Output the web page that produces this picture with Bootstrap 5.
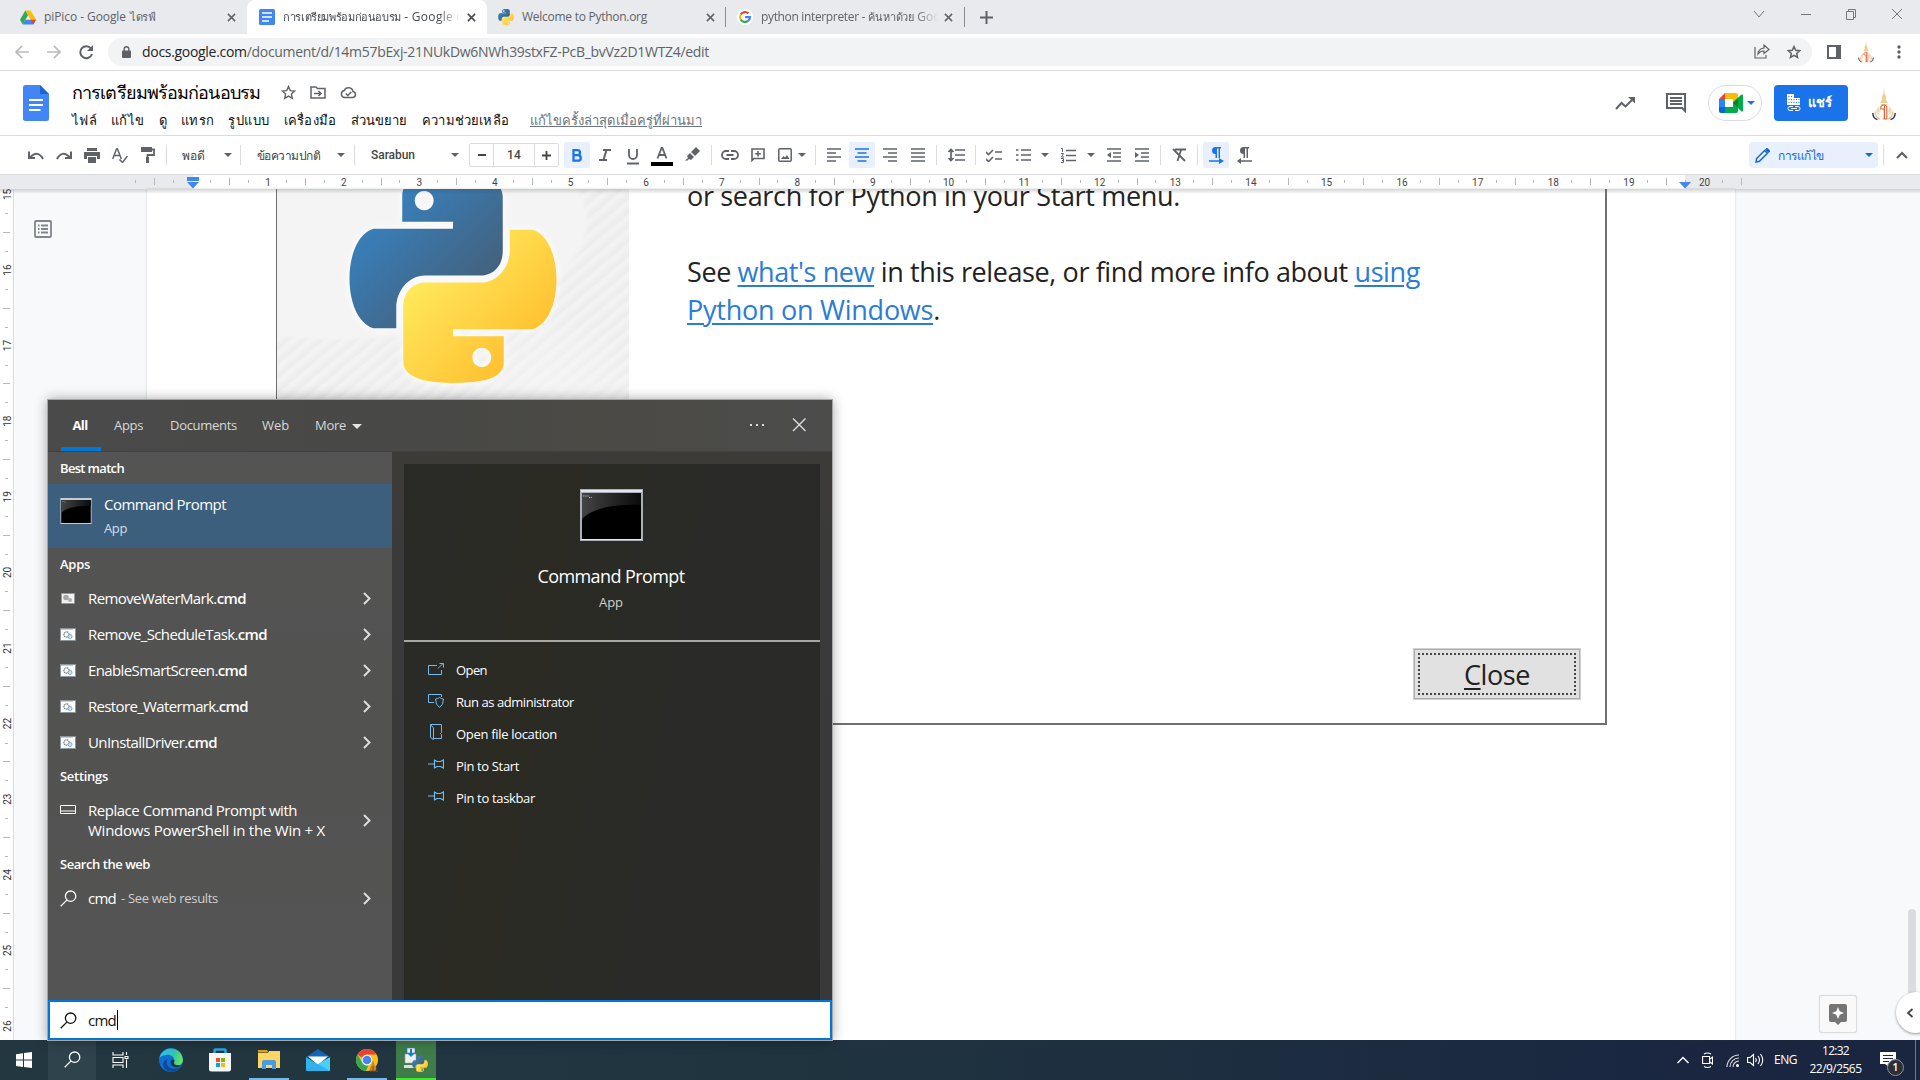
<!DOCTYPE html>
<html lang="th">
<head>
<meta charset="utf-8">
<title>การเตรียมพร้อมก่อนอบรม - Google เอกสาร</title>
<link href="https://cdn.jsdelivr.net/npm/bootstrap@5.3.0/dist/css/bootstrap.min.css" rel="stylesheet">
<style>
body{margin:0;font-family:"Open Sans","Noto Sans",sans-serif;overflow:hidden;line-height:1.2}
svg{display:block;flex:none}
[data-w]{white-space:nowrap;display:inline-block}
.screen{width:1920px;height:1080px}
/* browser */
.tabstrip{height:34px;background:#e8eaed;font-size:12px;color:#5f6368}
.btab{height:34px;flex:none;padding-left:20px}
.btab .lbl{margin-left:8px;line-height:22px;white-space:nowrap;flex:none}
.btab.on{background:#fff;border-radius:8px 8px 0 0;width:240px;padding-left:12px;color:#45494d}
.fade-r{overflow:hidden;-webkit-mask-image:linear-gradient(90deg,#000 88%,transparent)}
.th{font-size:11px}
.vline{width:1px;height:20px;background:#8a8d91;flex:none}
.navrow{height:37px;border-bottom:1px solid #d9dbde;background:#fff;font-size:14px;color:#5f6368;padding-bottom:1px}
.omni{margin-left:7px;width:1704px;height:28px;border-radius:14px;background:#f1f3f4;flex:none}
/* docs */
.dochead{height:65px;background:#fff;border-bottom:1px solid #d9dbde}
.doctitle{font-size:18px;color:#000;line-height:24px}
.docmenu{font-size:13px;color:#111;line-height:18px;height:18px}
.meet{width:54px;height:36px;border:1px solid #dadce0;border-radius:18px}
.share{width:74px;height:36px;border-radius:4px;background:#1a73e8;color:#fff;font-size:13px;font-weight:600}
.tools{height:39px;border-bottom:1px solid #d9dbde;background:#fff;padding-left:22px;color:#444746;font:500 12px Roboto,"Open Sans",sans-serif}
.tl{width:28px;height:26px;flex:none;display:flex;align-items:center;justify-content:center}
.tl.on{width:26px;background:#e8f0fe;color:#1a73e8;border-radius:2px;margin:0 1px}
.w30{width:30px}.w26{width:26px}.w14{width:14px}.w8{width:8px}.w16{width:16px}.w32{width:32px}
.sp{width:9px;height:20px;flex:none;background:linear-gradient(#dadce0,#dadce0) 4px 0/1px 20px no-repeat}
.car{width:0;height:0;border:4px solid transparent;border-top-color:#5f6368;border-bottom:0}
.fsbox{border:1px solid #dadce0;height:24px;width:90px;border-radius:2px;margin-right:4px}
.fsbox>*{border-right:1px solid #dadce0;height:22px;display:flex;align-items:center;justify-content:center}
.editbtn{width:129px;height:26px;background:#e8f0fe;border-radius:4px;color:#1967d2;padding:0 5px 0 6px}
.hrule{height:14px;background:#fff}
.editor{height:851px;background:#f8f9fa}
.topshade{height:5px;left:0;right:0;top:0;background:linear-gradient(rgba(60,64,67,.22),transparent)}
.vrule{width:14px;border-right:1px solid #dadce0;background:#fff}
.sheet{margin-left:133px;width:1588px;background:#fff;box-shadow:0 0 2px rgba(60,64,67,.25)}
.outline-ic{left:34px;top:31px}
.pic{margin-left:129px;width:1331px;height:536px;border:2px solid #6f6f6f;border-top:0;border-left-width:1.5px;overflow:hidden}
.side{width:352px;overflow:hidden;background:radial-gradient(ellipse 250px 120px at 18% 6%,#f4f4f4 97%,transparent),radial-gradient(circle 90px at 78% 40%,rgba(246,246,246,.7),transparent),repeating-linear-gradient(140deg,rgba(0,0,0,.022) 0 2px,transparent 4px 7px,rgba(0,0,0,.014) 9px 11px),linear-gradient(#f2f2f2,#f5f5f5)}
.side svg{margin:-15px 0 0 70px;filter:drop-shadow(0 0 5px #fff)}
.msg{font-size:27px;line-height:38px;color:#222;padding-left:58px;margin-top:-12px}
.msg u,.closebtn u{text-decoration-thickness:2px;text-underline-offset:3px}
.msg u{color:#2b7cd6}
.closebtn{width:166px;height:50px;background:#e1e1e1;border:1px solid #adadad;outline:1px solid #d0d0d0;margin:auto 25px 24px auto;padding:3px;font-size:27px;color:#222}
.closebtn>div{border:2px dotted #444;height:42px;line-height:39px;text-align:center}
.bar-v{left:1908px;top:720px;width:8px;height:100px;background:#dadce0;border-radius:4px}
.explore{left:1819px;top:806px;width:38px;height:38px;border:1px solid #dadce0;border-radius:3px;background:#f9f9f9;box-shadow:0 0 1px #ccc}
.pull{left:1896px;top:803px;width:40px;height:41px;border-radius:50%;background:#fff;box-shadow:0 1px 3px rgba(0,0,0,.4);padding-left:10px}
/* search flyout */
.fly{left:48px;top:400px;width:784px;height:640px;color:#fff;outline:1px solid #a5a5a5;box-shadow:0 0 12px rgba(0,0,0,.4)}
.flyhead{height:52px;background:linear-gradient(90deg,#4a4a4a,#484846 50%,#4b4a45 68%,#4c4c4c);font-size:13px;color:#d8d8d8;border-bottom:1px solid #414141}
.ftab{height:51px;border-bottom:4px solid transparent;padding-top:5px;display:flex;align-items:center;justify-content:center;flex:none}
.ftab.on{border-color:#0078d7;color:#fff;font-weight:700;width:40px;margin-left:13px}
.ftab.on span{margin-right:2px}
.fleft{width:344px;background:linear-gradient(#545454,#525251 50%,#545454)}
.fh{height:32px;font-size:13px;font-weight:600;padding:2px 0 0 12px;display:flex;align-items:center}
.fr{height:36px;padding:0 21px 0 12px;font-size:15px;display:flex;align-items:center}
.fr .ic{width:28px;flex:none}
.fr b{font-weight:600}
.best{height:64px;background:#3c5f7d;padding-left:12px}
.fright{width:440px;background:linear-gradient(#3c3b37,#3a3a3a 20%,#393939);padding:12px 12px 0}
.dark{background:linear-gradient(100deg,#2a2a28,#2b2a23 30%,#2a2a28 60%,#2a2a2a);height:536px}
.hero{height:178px;border-bottom:2px solid #a9a7a4;padding:25px 2px 0 0}
.act{height:32px;font-size:13px;padding:1px 0 0 24px;display:flex;align-items:center}
.act span{margin-left:12px}
.sbox{height:40px;background:#fff;border:2px solid #0078d7;color:#111;font-size:15px;padding-left:10px}
.caret-t{width:1px;height:20px;background:#000;margin-left:1px}
/* taskbar */
.tbar{height:40px;background:linear-gradient(90deg,#223740,#20353f 35%,#1e2f40 60%,#1a2741 85%,#1a2540);color:#fff;font-size:12px}
.tk{width:40px;margin-right:9px;height:40px;flex:none;display:flex;align-items:center;justify-content:center;border-bottom:2px solid transparent;padding-top:1px}
.tk.run{border-color:#76b9ed}
.tk.wide{width:48px;margin:0}
.tk.srch{background:#2f434c}
.tk.py{background:#3f7c49;border-color:#3ee82d}
.badge-n{width:17px;height:17px;border-radius:50%;background:#2b2f36;border:1px solid #8c929c;left:7px;top:7px;font-size:11px;font-weight:600;line-height:14px;text-align:center}
</style>
<script src="https://cdn.jsdelivr.net/npm/bootstrap@5.3.0/dist/js/bootstrap.bundle.min.js"></script>
</head>
<body>
<svg width="0" height="0" class="position-absolute"><defs>
<linearGradient id="pb" x1="0" y1="0" x2="1" y2="1"><stop offset=".25" stop-color="#387eb8"/><stop offset=".8" stop-color="#44617d"/></linearGradient>
<linearGradient id="pyel" x1="1" y1="1" x2="0" y2="0"><stop offset=".2" stop-color="#ffe95c"/><stop offset=".85" stop-color="#ffbd2c"/></linearGradient>
<symbol id="python" viewBox="348 173 210 211"><path fill="url(#pb)" fill-rule="evenodd" d="M402 221V195C402 181 416 174 453 174S503 183 503 196V250C503 265 494 275 480 275H425C408 275 396 291 396 307V328H373C341 318 341 238 373 228H453V221ZM424 190a9.5 9.7 0 1 0 .1 0Z"/><g transform="rotate(180 453 278.5)"><path fill="url(#pyel)" fill-rule="evenodd" d="M402 221V195C402 181 416 174 453 174S503 183 503 196V250C503 265 494 275 480 275H425C408 275 396 291 396 307V328H373C341 318 341 238 373 228H453V221ZM424 190a9.5 9.7 0 1 0 .1 0Z"/></g></symbol>
<symbol id="x" viewBox="0 0 10 10"><path d="M1 1l8 8M9 1l-8 8" stroke="currentColor" stroke-width="1.7" fill="none"/></symbol>
<symbol id="chev" viewBox="0 0 8 13"><path d="M1 1l5.5 5.5L1 12" stroke="#ddd" stroke-width="2" fill="none"/></symbol>
<symbol id="mag" viewBox="0 0 17 17"><path d="M6.6 10.4L.7 16.3M15.8 6.2a5.2 5.2 0 1 1-10.4 0 5.2 5.2 0 0 1 10.4 0Z" stroke="currentColor" stroke-width="1.3" fill="none"/></symbol>
<symbol id="pin" viewBox="0 0 16 10"><path d="M0 5h6M6.500 .5v9M6.500 1l2.500 1.500h3.500l3-1.500v8l-3-1.500H9L6.500 9" stroke="#76b9ed" stroke-width="1.200" fill="none"/></symbol>
<symbol id="cmdf" viewBox="0 0 16 13"><path fill="#fff" stroke="#8d969c" d="M.5.5h15v12H.5z"/><path stroke="#8d969c" d="M0 1h13"/><circle cx="6.500" cy="6.500" r="2.600" fill="none" stroke="#777" stroke-width="1.300" stroke-dasharray="1.200 .6"/><circle cx="10" cy="8.500" r="2" fill="#cfe8f7" stroke="#6aa3c5" stroke-width=".9"/></symbol>
<linearGradient id="gl" x1="0" x2="1"><stop stop-color="#444"/><stop offset="1" stop-color="#0b0b0b"/></linearGradient>
<symbol id="term" viewBox="0 0 63 52"><path fill="#a9b0bb" d="M0 0h63v52H0z"/><path fill="#e3e6ef" d="M1 1h61v2H1zM1 50h61v1H1z"/><path fill="#000" d="M2 4h59v46H2z"/><path fill="url(#gl)" d="M2 4h59v12C35 15 12 19 2 30z"/><path d="M3 7h6M9 8.500h3" stroke="#aaa" stroke-dasharray="1.500 .7"/></symbol>
<symbol id="crest" viewBox="0 0 24 33"><path fill="#edcf92" d="M12 0l.7 6 1.600 3-.4 2.500L16 15H8l2.100-3.500L9.700 9l1.600-3z"/><path fill="#f3dcae" d="M8.500 16h7l-1 2h-5zM4 22l3-4 1 5-2 5zM20 22l-3-4-1 5 2 5z"/><path fill="none" stroke="#d9603a" stroke-width="1.100" d="M8.800 18.500q3-3.500 6 0V31h-3.500M8.800 18.500v2.500h3.500v10M12.500 18v13"/><path fill="none" stroke="#2c2f6e" stroke-width="1.400" d="M.8 25q.2 5.500 4.700 6.500M23.200 25q-.2 5.500-4.700 6.500"/><path fill="none" stroke="#f0b45c" stroke-width="1.100" d="M3 23.500q.5 6 5 7.500M21 23.500q-.5 6-5 7.500"/></symbol>
<symbol id="docic" viewBox="0 0 26 36"><path fill="#4285f4" d="M2.500 0H17l9 9v24.500a2.500 2.500 0 0 1-2.500 2.500h-21A2.500 2.500 0 0 1 0 33.500v-31A2.500 2.500 0 0 1 2.500 0z"/><path fill="#1c66d0" d="M17 0l9 9h-9z"/><path stroke="#fff" stroke-width="2" d="M6 15h14M6 20h14M6 25h11.500"/></symbol>
</defs></svg>

<div class="screen position-relative d-flex flex-column overflow-hidden">
<!-- tab strip -->
<div class="tabstrip d-flex align-items-center">
 <div class="btab d-flex align-items-center" style="width:247px"><svg width="16" height="15" viewBox="0 0 24 21"><path fill="#fbbc04" d="M8 0h8l8 14h-8z"/><path fill="#34a853" d="M8 0l4 7L4 21l-4-7z"/><path fill="#4285f4" d="M8 14h16l-4 7H4z"/><path fill="#ea4335" d="M16 14h8l-4 7z"/></svg><span class="lbl"><span data-w="82">piPico - Google</span><span class="th ms-1" data-w="25">ไดรฟ์</span></span><svg class="ms-auto" style="margin-right:11px" width="9" height="9"><use href="#x"/></svg></div>
 <div class="btab on d-flex align-items-center"><svg width="16" height="16" viewBox="0 0 16 16"><rect width="16" height="16" rx="1.500" fill="#4285f4"/><path stroke="#fff" stroke-width="1.700" d="M3 4h10M3 8h10M3 12h7"/></svg><span class="lbl fade-r" style="width:177px"><span class="th" data-w="118">การเตรียมพร้อมก่อนอบรม</span> <span data-w="49">- Google</span> เอก</span><svg class="ms-auto" style="margin-right:11px" width="9" height="9"><use href="#x"/></svg></div>
 <div class="btab d-flex align-items-center" style="width:238px;padding-left:11px"><svg width="16" height="16"><use href="#python"/></svg><span class="lbl" data-w="125">Welcome to Python.org</span><svg class="ms-auto" style="margin-right:10px" width="9" height="9"><use href="#x"/></svg></div>
 <div class="vline"></div>
 <div class="btab d-flex align-items-center" style="width:238px;padding-left:11px"><svg width="16" height="16" viewBox="0 0 16 16"><circle cx="8" cy="8" r="8" fill="#fff"/><g fill="none" stroke-width="2.200"><path stroke="#ea4335" d="M3.700 5.500A5 5 0 0 1 11.500 4.400"/><path stroke="#fbbc04" d="M3.700 5.500a5 5 0 0 0 0 5"/><path stroke="#34a853" d="M3.700 10.500a5 5 0 0 0 7.600 1.200"/><path stroke="#4285f4" d="M11.300 11.700A5 5 0 0 0 13 8.200H8"/></g></svg><span class="lbl fade-r" style="width:177px"><span data-w="104">python interpreter -</span> <span class="th" data-w="46">ค้นหาด้วย</span> Goo</span><svg class="ms-auto" style="margin-right:11px" width="9" height="9"><use href="#x"/></svg></div>
 <div class="vline"></div>
 <svg style="margin-left:15px" width="13" height="13"><path d="M6.500 0v13M0 6.500h13" stroke="#5f6368" stroke-width="2"/></svg>
 <svg class="ms-auto" style="margin-right:17px;margin-bottom:6px" width="150" height="12" fill="none" stroke="#777"><path d="M1 3l5 6 5-6M48 6.500h10M93.500 3.500h7v8h-7zM95.500 3.500v-2h7v8h-2M139 1l10 10M149 1l-10 10"/></svg>
</div>
<!-- address row -->
<div class="navrow d-flex align-items-center">
 <svg style="margin-left:15px" width="86" height="18" fill="none" stroke-width="1.700"><path stroke="#b8babd" d="M14 9H1M7 3L1 9l6 6M32 9h13M39 3l6 6-6 6"/><path stroke="#5f6368" stroke-width="2" d="M76 5.500A6 6 0 1 0 77 11"/><path fill="#5f6368" d="M78 2v6h-6z"/></svg>
 <div class="omni d-flex align-items-center"><svg style="margin-left:14px" width="9" height="12"><path fill="#5f6368" d="M1 4.500h7a1 1 0 0 1 1 1V11a1 1 0 0 1-1 1H1a1 1 0 0 1-1-1V5.500a1 1 0 0 1 1-1z"/><path fill="none" stroke="#5f6368" stroke-width="1.400" d="M2.200 5V3a2.300 2.300 0 0 1 4.600 0v2"/></svg><span style="margin-left:11px;padding-top:1px" data-w="567"><span class="text-dark">docs.google.com</span>/document/d/14m57bExj-21NUkDw6NWh39stxFZ-PcB_bvVz2D1WTZ4/edit</span>
 <svg class="ms-auto" width="16" height="15" fill="none" stroke="#5f6368" stroke-width="1.200"><path d="M1 3v11h11v-3M4 10q0-5 6-6V1l5 4.500L10 9.500V7q-4 0-6 3z"/></svg><svg style="margin:0 11px 0 17px" width="14" height="14" viewBox="0 0 24 24"><path fill="none" stroke="#5f6368" stroke-width="2.500" d="M12 2.500l2.900 6.500 7 .7-5.300 4.700 1.500 7-6.100-3.600-6.100 3.600 1.500-7L2.100 9.700l7-.7z"/></svg></div>
 <svg style="margin-left:15px" width="14" height="14"><path fill="#5f6368" fill-rule="evenodd" d="M0 0h14v14H0zM2 2v10h7V2z"/></svg><svg style="margin-left:17px" width="16" height="22"><use href="#crest"/></svg><svg style="margin-left:23px" width="4" height="14" fill="#5f6368"><circle cx="2" cy="2" r="1.700"/><circle cx="2" cy="7" r="1.700"/><circle cx="2" cy="12" r="1.700"/></svg>
</div>
<!-- document header -->
<div class="dochead d-flex">
 <svg style="margin:14px 23px 0" width="26" height="36"><use href="#docic"/></svg>
 <div style="padding-top:9px">
  <div class="d-flex align-items-center doctitle"><span data-w="188">การเตรียมพร้อมก่อนอบรม</span>
  <svg style="margin-left:21px" width="15" height="15" viewBox="0 0 24 24"><path fill="none" stroke="#5f6368" stroke-width="2.200" d="M12 2.500l2.900 6.500 7 .7-5.300 4.700 1.500 7-6.100-3.600-6.100 3.600 1.500-7L2.100 9.700l7-.7z"/></svg>
  <svg style="margin-left:14px" width="16" height="13" fill="none" stroke="#5f6368" stroke-width="1.500"><path d="M1 12V1h5l1.500 1.500H15V12zM4 7.500h7M8.500 5L11 7.500 8.500 10"/></svg>
  <svg style="margin-left:14px" width="17" height="13" fill="none" stroke="#5f6368" stroke-width="1.500"><path d="M4.500 11.500a3.500 3.500 0 0 1-.3-6.900 4.600 4.600 0 0 1 8.800 1 3 3 0 0 1 0 5.900zM5.800 7.500l2 2 3.500-3.500"/></svg></div>
  <div class="d-flex docmenu" style="margin-top:7px"><span data-w="25">ไฟล์</span><span style="margin-left:14px" data-w="33">แก้ไข</span><span style="margin-left:15px" data-w="8">ดู</span><span style="margin-left:14px" data-w="33">แทรก</span><span style="margin-left:14px" data-w="42">รูปแบบ</span><span style="margin-left:14px" data-w="52">เครื่องมือ</span><span style="margin-left:15px" data-w="56">ส่วนขยาย</span><span style="margin-left:15px" data-w="87">ความช่วยเหลือ</span><u class="text-secondary" style="margin-left:21px" data-w="172">แก้ไขครั้งล่าสุดเมื่อครู่ที่ผ่านมา</u></div>
 </div>
 <div class="ms-auto d-flex align-items-center" style="margin-right:24px;height:64px">
  <svg width="20" height="13"><path d="M1 12l5.500-6 4 3.500L17 3" stroke="#5f6368" stroke-width="2" fill="none"/><path fill="#5f6368" d="M13 0h7v6.500z"/></svg>
  <svg style="margin-left:31px" width="20" height="20" viewBox="0 0 20 20"><path fill="none" stroke="#5f6368" stroke-width="2" d="M1 1h18v17l-3-3H1zM4 5h12M4 8h12M4 11h12"/></svg>
  <div class="meet d-flex align-items-center" style="margin-left:22px;padding-left:10px"><svg width="24" height="20"><path fill="#ea4335" d="M0 6l6-6v6z"/><path fill="#fbbc04" d="M6 0h11a2 2 0 0 1 2 2v6l-5 3V6H6z"/><path fill="#2684fc" d="M0 6h6v8H0z"/><path fill="#0066da" d="M0 14h6v6H2a2 2 0 0 1-2-2z"/><path fill="#00ac47" d="M6 14h8V9l8.500-7.500q1.500-.5 1.500 1v15q0 1.500-1.500 1L19 15v3a2 2 0 0 1-2 2H6z"/><path fill="#00832d" d="M14 10l5-4.500v9z"/></svg><i class="car" style="margin-left:4px;border-top-color:#1a73e8"></i></div>
  <div class="share d-flex align-items-center" style="margin-left:12px;padding-left:13px"><svg width="14" height="18" viewBox="0 0 14 18"><path fill="#fff" d="M0 0h7v4h6v7H0z"/><path stroke="#1a73e8" d="M1.500 2.500h5M1.500 5.500h11M1.500 8.500h11" stroke-dasharray="1 1.500"/><path fill="none" stroke="#fff" d="M6 12.500H3a2 2 0 0 0 0 4h3M8 12.500h3a2 2 0 0 1 0 4H8M4 14.500h6"/></svg><span style="margin-left:7px" data-w="24">แชร์</span></div>
  <svg style="margin:2px 0 0 24px" width="24" height="33"><use href="#crest"/></svg>
 </div>
</div>
<!-- formatting toolbar -->
<div class="tools d-flex align-items-center">
 <div class="tl"><svg width="16" height="9" fill="none" stroke="#5f6368" stroke-width="2"><path d="M1 .5V7h6M2 6.500q8-8 13 1.500"/></svg></div>
 <div class="tl"><svg width="16" height="9" fill="none" stroke="#5f6368" stroke-width="2"><path d="M15 .5V7H9M14 6.500q-8-8-13 1.500"/></svg></div>
 <div class="tl"><svg width="16" height="15" fill="#5f6368"><path d="M3 0h10v3H3zM0 4h16v7h-3V8H3v3H0zM4 9h8v6H4z"/></svg></div>
 <div class="tl"><svg width="16" height="15" fill="none" stroke="#5f6368" stroke-width="1.500"><path d="M.7 11L4.500 1h1l3.800 10M2 7.500h6M7.500 11.500l3 3L15.500 8"/></svg></div>
 <div class="tl"><svg width="14" height="16"><path d="M0 0h11v5H0zM5 10h3v6H5z" fill="#5f6368"/><path d="M11 2.500h2V8H6.500v3" stroke="#5f6368" stroke-width="1.800" fill="none"/></svg></div>
 <div class="sp"></div>
 <div class="d-flex align-items-center justify-content-between" style="width:65px;padding:0 4px 0 11px"><span data-w="23">พอดี</span><i class="car"></i></div><div class="sp"></div>
 <div class="d-flex align-items-center justify-content-between" style="width:105px;padding:0 5px 0 12px"><span data-w="63">ข้อความปกติ</span><i class="car"></i></div><div class="sp"></div>
 <div class="d-flex align-items-center justify-content-between" style="width:110px;padding:0 10px 0 12px"><span data-w="44">Sarabun</span><i class="car"></i></div>
 <div class="fsbox d-flex"><div style="width:24px"><svg width="8" height="2"><path d="M0 0h8v2H0z" fill="#444"/></svg></div><div style="width:41px"><span data-w="14">14</span></div><div class="border-0" style="width:23px"><svg width="9" height="9"><path d="M4.500 0v9M0 4.500h9" stroke="#444" stroke-width="1.800"/></svg></div></div>
 <div class="tl on fw-bold"><svg width="10" height="13" fill="none" stroke="#1a73e8" stroke-width="2.300"><path d="M1.500 1.200h4a2.500 2.500 0 0 1 0 5h-4zM1.500 6.200h4.500a2.700 2.700 0 0 1 0 5.500H1.500z"/></svg></div>
 <div class="tl"><svg width="12" height="12" stroke="#5f6368" stroke-width="2"><path d="M4 1h8M0 11h8M7.500 1L4.500 11" fill="none"/></svg></div>
 <div class="tl"><svg style="margin-top:3px" width="12" height="16" stroke="#5f6368" stroke-width="1.800" fill="none"><path d="M2 0v6a4 4 0 0 0 8 0V0M0 14.500h12"/></svg></div>
 <div class="tl w30"><svg style="margin-top:3px" width="22" height="19" fill="none" stroke="#5f6368" stroke-width="1.800"><path d="M6.500 11.500L10.600 1h.8l4.100 10.500M8 8h6"/><path stroke="#000" stroke-width="4" d="M0 17h22"/></svg></div>
 <div class="tl w30"><svg style="margin-bottom:3px" width="15" height="14" fill="#5f6368"><path d="M11 0l4 4-5 5-4-4zM5 6l4 4-3 3-2-1-1.500 1.500H0L3 11 2 9z"/></svg></div>
 <div class="sp"></div>
 <div class="tl"><svg width="18" height="10" fill="none" stroke="#5f6368" stroke-width="1.800"><path d="M8 1H5a4 4 0 0 0 0 8h3M10 1h3a4 4 0 0 1 0 8h-3M5.500 5h7"/></svg></div>
 <div class="tl"><svg width="14" height="14" fill="none" stroke="#5f6368" stroke-width="1.600"><path d="M1 12.500V1h12v9.500H3zM7 3v5.500M4.200 5.700h5.600"/></svg></div>
 <div class="tl w26"><svg width="14" height="14"><rect x=".8" y=".8" width="12.400" height="12.400" rx="1" fill="none" stroke="#5f6368" stroke-width="1.500"/><path fill="#5f6368" d="M3 11l2.500-3L7 9.500 9 7l2.500 4z"/></svg></div><div class="tl w8"><i class="car"></i></div>
 <div class="sp" style="margin-left:5px"></div>
 <div class="tl"><svg width="14" height="14" stroke="#5f6368" stroke-width="1.700"><path d="M0 1h14M0 5h9M0 9h14M0 13h9"/></svg></div>
 <div class="tl on"><svg width="14" height="14" stroke="#1a73e8" stroke-width="1.700"><path d="M0 1h14M2.500 5h9M0 9h14M2.500 13h9"/></svg></div>
 <div class="tl"><svg width="14" height="14" stroke="#5f6368" stroke-width="1.700"><path d="M0 1h14M5 5h9M0 9h14M5 13h9"/></svg></div>
 <div class="tl"><svg width="14" height="14" stroke="#5f6368" stroke-width="1.700"><path d="M0 1h14M0 5h14M0 9h14M0 13h14"/></svg></div>
 <div class="sp"></div>
 <div class="tl w30"><svg width="17" height="14" stroke="#5f6368" stroke-width="1.700" fill="none"><path d="M7 2h10M7 7h10M7 12h10M3 1.500v11M.5 4L3 1.500 5.500 4M.5 10L3 12.500 5.500 10"/></svg></div>
 <div class="sp"></div>
 <div class="tl"><svg width="16" height="13" stroke="#5f6368" stroke-width="1.600" fill="none"><path d="M9 3h7M9 10h7M0 3l2.500 2.500L7 1M0 10l2.500 2.500L7 8"/></svg></div>
 <div class="tl w30"><svg width="15" height="14" stroke="#5f6368" stroke-width="1.700"><path d="M5 2h10M5 7h10M5 12h10M0 2h2.500M0 7h2.500M0 12h2.500"/></svg></div><div class="tl w14"><i class="car"></i></div>
 <div class="tl w32"><svg width="15" height="15" stroke="#5f6368" stroke-width="1.700" fill="none"><path d="M5 2.500h10M5 7.500h10M5 12.500h10"/><path stroke-width="1" d="M0 .5h1.500V4M0 5.500h2.500L.5 9H3M0 10.500h2.500v4H0M1 12.500h1.500"/></svg></div><div class="tl w14"><i class="car"></i></div>
 <div class="tl" style="margin-left:2px"><svg width="14" height="14" stroke="#5f6368" stroke-width="1.600"><path d="M0 1h14M6 5h8M6 9h8M0 13h14"/><path stroke="none" fill="#5f6368" d="M4 4v6L0 7z"/></svg></div>
 <div class="tl"><svg width="14" height="14" stroke="#5f6368" stroke-width="1.600"><path d="M0 1h14M6 5h8M6 9h8M0 13h14"/><path stroke="none" fill="#5f6368" d="M0 4v6l4-3z"/></svg></div>
 <div class="sp"></div>
 <div class="tl"><svg width="14" height="14" stroke="#5f6368" stroke-width="1.800" fill="none"><path d="M3 1.500h11M9 2L5.500 13M1 1l12 12"/></svg></div>
 <div class="sp"></div>
 <div class="tl on"><svg width="15" height="17" fill="#1a73e8"><path d="M6 0h6v1.600h-1V11H9.500V1.600H8V11H6.500V7a3.500 3.500 0 0 1 0-7zM0 13.200h10V11l5 3-5 3v-2.200H0z"/></svg></div>
 <div class="tl"><svg width="15" height="17" fill="#5f6368"><path d="M6 0h6v1.600h-1V11H9.500V1.600H8V11H6.500V7a3.500 3.500 0 0 1 0-7zM15 13.200H4V11l-4 3 4 3v-2.200h11z"/></svg></div>
 <div class="editbtn d-flex align-items-center ms-auto"><svg width="15" height="15" viewBox="0 0 15 15"><path fill="none" stroke="#1967d2" stroke-width="1.500" d="M1 14l.6-3.500 8-8 2.800 2.800-8 8zM11 1.500l1-1 2.500 2.500-1 1z"/></svg><span style="margin-left:8px" data-w="46">การแก้ไข</span><i class="car ms-auto" style="border-top-color:#1967d2"></i></div>
 <div class="sp" style="margin-left:1px"></div><svg style="margin:0 12px 0 8px" width="12" height="8"><path d="M1 7l5-5 5 5" fill="none" stroke="#5f6368" stroke-width="2.200"/></svg>
</div>
<svg class="hrule" id="hr" width="1920" height="14"></svg>
<!-- editor -->
<div class="editor position-relative d-flex">
 <svg class="vrule" id="vr" width="14" height="851"></svg>
 <div class="sheet">
  <div class="pic d-flex">
   <div class="side"><svg width="212" height="210"><use href="#python"/></svg></div>
   <div class="d-flex flex-column flex-grow-1">
    <div class="msg"><span data-w="493">or search for Python in your Start menu.</span><br><br><span data-w="733">See <u>what's new</u> in this release, or find more info about <u>using</u></span><br><span data-w="253"><u>Python on Windows</u>.</span></div>
    <div class="closebtn"><div><span data-w="66"><u>C</u>lose</span></div></div>
   </div>
  </div>
 </div>
 <div class="topshade position-absolute"></div>
 <svg class="outline-ic position-absolute" width="18" height="18" fill="none" stroke="#80868b" stroke-width="1.800"><rect x="1" y="1" width="16" height="16" rx="1"/><path d="M4 5.500h1.500M7 5.500h7M4 9h1.500M7 9h7M4 12.500h1.500M7 12.500h7"/></svg>
 <div class="bar-v position-absolute"></div>
 <div class="explore position-absolute d-flex align-items-center justify-content-center"><svg width="18" height="21"><path fill="#757575" d="M2 0h14a2 2 0 0 1 2 2v14a2 2 0 0 1-2 2h-4l-3 3-3-3H2a2 2 0 0 1-2-2V2a2 2 0 0 1 2-2z"/><path fill="#fff" d="M9 3l1.700 4.300L15 9l-4.300 1.700L9 15l-1.700-4.300L3 9l4.300-1.700z"/></svg></div>
 <div class="pull position-absolute d-flex align-items-center"><svg width="8" height="10"><path d="M6.500 1L2 5l4.500 4" fill="none" stroke="#444" stroke-width="1.800"/></svg></div>
</div>
<!-- taskbar -->
<div class="tbar d-flex">
 <div class="tk wide"><svg width="16" height="16" fill="#fff"><path d="M0 2.200L7 1.200V7.600H0zM8 1L16 0V7.600H8zM0 8.500H7V14.900L0 13.900zM8 8.500H16V16L8 15z"/></svg></div>
 <div class="tk wide srch"><svg width="17" height="17"><use href="#mag"/></svg></div>
 <div class="tk wide" style="margin-right:7px"><svg width="17" height="16" fill="none" stroke="#fff" stroke-width="1.100"><path d="M1 0v3h10V0M1 16v-3h10v3M1 5.500h10v5H1zM14.500 0v3M14.500 7.500V16M13 4.500h3v2h-3z"/></svg></div>
 <div class="tk"><svg width="24" height="24" viewBox="0 0 24 24"><defs><linearGradient id="e1" x1="0" y1=".2" x2="1" y2=".4"><stop stop-color="#35c1f1"/><stop offset=".6" stop-color="#2fc2b8"/><stop offset="1" stop-color="#6be25a"/></linearGradient></defs><circle cx="12" cy="12" r="12" fill="#0f6fd0"/><path fill="url(#e1)" d="M.3 10A12 12 0 0 1 24 11.500c0 4-3 6-6.500 6-3 0-4-1.500-3-3C17 10 12 6 7 7 3 7.500 1 9 .3 10z"/><path fill="#0c4a9b" d="M9 11c-4 5 1 13 13 8-4 5-11 6-15 3-5-5-3-10 2-11z"/><path fill="#20363f" d="M13 11.500c-2 1.500-2 5 1 7 3 1.500 6 .8 9-1.200l1.500 0-1.200 3 1 0V17c-2 .5-8.800 1-9.300-2-.1-1 .9-1.500.5-2.700z"/></svg></div>
 <div class="tk"><svg width="24" height="24"><path d="M6.500 6V2.500a1 1 0 0 1 1-1h9a1 1 0 0 1 1 1V6" fill="none" stroke="#29a3e8" stroke-width="2.600"/><path fill="#f6f6f6" d="M1 5h22v16a2.500 2.500 0 0 1-2.500 2.500h-17A2.500 2.500 0 0 1 1 21z"/><path fill="#f25022" d="M8 10h4v4H8z"/><path fill="#7fba00" d="M13 10h4v4h-4z"/><path fill="#00a4ef" d="M8 15h4v4H8z"/><path fill="#ffb900" d="M13 15h4v4h-4z"/></svg></div>
 <div class="tk run"><svg width="22" height="19"><path fill="#e0a21b" d="M0 0h9l1.500 2.500H0z"/><path fill="#fdd663" d="M0 3h10l1-2h11v17H0z"/><path fill="#4a9be0" d="M4 19v-7a2 2 0 0 1 2-2h10a2 2 0 0 1 2 2v7h-4v-4H8v4z"/></svg></div>
 <div class="tk"><svg width="24" height="22"><path fill="#1565b8" d="M0 8l12-8 12 8z"/><path fill="#fff" d="M2 7.500h20L12 16z"/><path fill="#2fb4ee" d="M0 8l12 7.500L0 22z"/><path fill="#48d0fa" d="M24 8L0 22h24z"/><path fill="#1e8fe0" d="M0 22l12-7 12 7z" opacity=".5"/></svg></div>
 <div class="tk run"><svg width="24" height="24" viewBox="0 0 24 24"><circle cx="12" cy="12" r="11" fill="#fbc116"/><path fill="#ea4335" d="M2.500 6.500A11 11 0 0 1 21.500 6.500H12a5.500 5.500 0 0 0-5 3.300z"/><path fill="#34a853" d="M2.500 6.500l4.800 8.300a5.500 5.500 0 0 0 6 2.700L11 23A11 11 0 0 1 2.500 6.500z"/><circle cx="12" cy="12" r="5.300" fill="#fff"/><circle cx="12" cy="12" r="4.300" fill="#4285f4"/><path fill="#c5862c" d="M18 12l1.500 5 2 3-1 3h-5l-1-2 2-4z"/><path stroke="#8c4b25" d="M15 23h8M18 18v5"/></svg></div>
 <div class="tk py"><svg width="24" height="26"><path fill="#f0f0f0" stroke="#999" stroke-width=".5" d="M1 7h11v9H1z"/><path fill="#ddd" d="M0 18h12v3H0z"/><path fill="#f0f0f0" stroke="#1a7fd0" stroke-width=".6" d="M3 1h8v5H3z"/><path fill="#1a7fd0" d="M6 2h2v4h3L7 10 3 6h3z"/><svg x="8" y="9" width="16" height="16"><use href="#python"/></svg></svg></div>
 <div class="ms-auto d-flex align-items-center">
  <svg width="12" height="8"><path d="M.5 7L6 1.500 11.500 7" fill="none" stroke="#fff" stroke-width="1.400"/></svg>
  <svg style="margin-left:13px" width="11" height="17" fill="none" stroke="#fff" stroke-width="1.100"><path d="M.6 4.500h7v7h-7zM8 7l2.500-2v7L8 10M2 2q3.500-2 7 0M2 14.500q3.500 2 7 0"/></svg>
  <svg style="margin-left:13px" width="13" height="13" fill="none" stroke="#ddd" stroke-width="1.100"><path d="M1 13A12 12 0 0 1 13 1M4 13a9 9 0 0 1 9-9M7 13a6 6 0 0 1 6-6"/><circle cx="11.500" cy="11.500" r="1.500" fill="#fff" stroke="none"/></svg>
  <svg style="margin-left:8px" width="17" height="14" fill="none" stroke="#fff" stroke-width="1.100"><path d="M.6 4.500h2.500L6.500 1.500v11L3.100 9.500H.6zM8.500 5q1.500 2 0 4M11 3q3 4 0 8M13.500 1q4.500 6 0 12"/></svg>
  <span style="margin-left:10px" data-w="23">ENG</span>
  <div class="text-center" style="margin-left:12px;width:53px;line-height:18px"><span data-w="27">12:32</span><br><span data-w="52">22/9/2565</span></div>
  <div class="position-relative" style="margin:0 18px 0 18px"><svg width="17" height="16"><path fill="#fff" d="M0 0h16v12H9v3l-4-3H0z"/><path stroke="#1a2741" d="M3 3.500h10M3 6.500h10M3 9.500h6"/></svg><div class="badge-n position-absolute">1</div></div>
  <div style="width:1px;height:40px;background:#6b7688;margin-right:4px"></div>
 </div>
</div>
<!-- search flyout -->
<div class="fly position-absolute d-flex flex-column">
 <div class="flyhead d-flex align-items-start">
  <div class="ftab on"><span data-w="15">All</span></div><div class="ftab" style="margin-left:13px"><span data-w="29">Apps</span></div><div class="ftab" style="margin-left:27px"><span data-w="67">Documents</span></div><div class="ftab" style="margin-left:25px"><span data-w="27">Web</span></div><div class="ftab" style="margin-left:26px"><span data-w="31">More</span><i class="car" style="border-width:5px 5px 0;border-top-color:#e5e5e5;margin-left:6px"></i></div>
  <svg class="ms-auto" style="margin:18px 25px 0 0" width="57" height="14"><path fill="#ddd" d="M0 6h2v2H0zM6 6h2v2H6zM12 6h2v2h-2z"/><path stroke="#ddd" stroke-width="1.400" d="M43 .5l12.500 12.500M55.500 .5L43 13"/></svg>
 </div>
 <div class="d-flex" style="height:548px">
  <div class="fleft">
   <div class="fh"><span data-w="64">Best match</span></div>
   <div class="best d-flex"><svg style="margin-top:14px" width="32" height="26"><use href="#term"/></svg><div style="margin-left:12px;padding-top:10px"><div style="font-size:15px;line-height:20px"><span data-w="122">Command Prompt</span></div><div style="font-size:13px;line-height:18px;margin-top:5px;color:#d5dee6"><span data-w="23">App</span></div></div></div>
   <div class="fh"><span data-w="30">Apps</span></div>
   <div class="fr"><div class="ic"><svg width="16" height="13"><path fill="#f2f2f2" stroke="#999" d="M1.500 1.500h13v10h-13z"/><circle cx="6" cy="5.500" r="2.800" fill="#a8a8a8"/><circle cx="10" cy="8" r="2" fill="#a9b0b5"/></svg></div><span data-w="158">RemoveWaterMark.<b>cmd</b></span><svg class="ms-auto" width="8" height="13"><use href="#chev"/></svg></div>
   <div class="fr"><div class="ic"><svg width="16" height="13"><use href="#cmdf"/></svg></div><span data-w="179">Remove_ScheduleTask.<b>cmd</b></span><svg class="ms-auto" width="8" height="13"><use href="#chev"/></svg></div>
   <div class="fr"><div class="ic"><svg width="16" height="13"><use href="#cmdf"/></svg></div><span data-w="159">EnableSmartScreen.<b>cmd</b></span><svg class="ms-auto" width="8" height="13"><use href="#chev"/></svg></div>
   <div class="fr"><div class="ic"><svg width="16" height="13"><use href="#cmdf"/></svg></div><span data-w="160">Restore_Watermark.<b>cmd</b></span><svg class="ms-auto" width="8" height="13"><use href="#chev"/></svg></div>
   <div class="fr"><div class="ic"><svg width="16" height="13"><use href="#cmdf"/></svg></div><span data-w="129">UnInstallDriver.<b>cmd</b></span><svg class="ms-auto" width="8" height="13"><use href="#chev"/></svg></div>
   <div class="fh"><span data-w="48">Settings</span></div>
   <div class="fr" style="height:56px"><div class="ic" style="margin-bottom:20px"><svg width="16" height="10" fill="none" stroke="#fff"><path d="M.5.5h15v8H.5zM1 6h14"/></svg></div><div style="line-height:20px"><span data-w="209">Replace Command Prompt with</span><br><span data-w="237">Windows PowerShell in the Win + X</span></div><svg class="ms-auto" width="8" height="13"><use href="#chev"/></svg></div>
   <div class="fh"><span data-w="90">Search the web</span></div>
   <div class="fr"><div class="ic"><svg width="17" height="17"><use href="#mag"/></svg></div><span data-w="28">cmd</span><span style="font-size:13px;color:#d0d0d0;margin-left:5px;padding-top:1px" data-w="97">- See web results</span><svg class="ms-auto" width="8" height="13"><use href="#chev"/></svg></div>
  </div>
  <div class="fright"><div class="dark">
   <div class="hero d-flex flex-column align-items-center"><svg width="63" height="52"><use href="#term"/></svg><div style="font-size:18px;line-height:24px;margin-top:23px"><span data-w="147">Command Prompt</span></div><div style="font-size:13px;line-height:18px;margin-top:5px;color:#d0d0d0"><span data-w="24">App</span></div></div>
   <div style="padding-top:12px">
   <div class="act"><svg style="margin-bottom:4px" width="16" height="12" fill="none" stroke="#76b9ed"><path d="M9 2.500H.5v9h13V7M10 5.500l5-5M11.500.5h4v4"/></svg><span data-w="31">Open</span></div>
   <div class="act"><svg style="margin-bottom:4px" width="16" height="14" fill="none" stroke="#76b9ed"><path d="M6 8.500H.5V.5h13V3M11.500 3.500q2 1.500 4 1.500 0 6-4 8.500-4-2.500-4-8.500 2 0 4-1.500z"/></svg><span data-w="118">Run as administrator</span></div>
   <div class="act"><svg style="margin-bottom:6px" width="16" height="16" fill="none" stroke="#76b9ed"><path d="M2.500.5h11v8l-1 1 1 1v4h-8M2.500.5v13l3 2V4z"/></svg><span data-w="101">Open file location</span></div>
   <div class="act"><svg style="margin-bottom:5px" width="16" height="10"><use href="#pin"/></svg><span data-w="63">Pin to Start</span></div>
   <div class="act"><svg style="margin-bottom:5px" width="16" height="10"><use href="#pin"/></svg><span data-w="79">Pin to taskbar</span></div>
   </div>
  </div></div>
 </div>
 <div class="sbox d-flex align-items-center"><svg style="margin-right:11px" width="17" height="17"><use href="#mag"/></svg><span data-w="28">cmd</span><div class="caret-t"></div></div>
</div>
</div>
<script>
// rulers: one centimetre is 75.6px
(function(){
 var s='<path fill="#e8eaed" d="M0 0h193v14H0zM1685 0h235v14h-235z"/>',i,x;
 for(i=-3;i<=82;i++){x=192.5+i*18.9;if(i==0)continue;
  if(i%4==0){s+='<text x="'+x+'" y="10.500" text-anchor="middle" font-family="Roboto" font-size="10" fill="#444">'+i/4+'</text>';}
  else{var b=i%2==0;s+='<path stroke="#b5b8bc" d="M'+(Math.round(x)-.5)+' '+(b?3:5)+'v'+(b?7:3)+'"/>';}}
 s+='<path fill="#4285f4" d="M187 2h12v4h-12zM187 7h12l-6 6.500zM1679 7h12l-6 6.500z"/>';
 document.getElementById('hr').innerHTML=s;
 s='';
 for(i=60;i<=106;i++){x=-940.6-188+i*18.9;
  if(i%4==0){s+='<text transform="translate(11 '+x+') rotate(-90)" text-anchor="middle" font-family="Roboto" font-size="10" fill="#333">'+i/4+'</text>';}
  else{var c=i%2==0;s+='<path stroke="#b5b8bc" d="M'+(c?3:5)+' '+(Math.round(x)+.5)+'h'+(c?7:3)+'"/>';}}
 document.getElementById('vr').innerHTML=s;
 // track each label so it occupies its nominal width
 document.querySelectorAll('[data-w]').forEach(function(e){
  var w=+e.dataset.w,a=e.getBoundingClientRect().width;
  e.style.letterSpacing='1px';var d=e.getBoundingClientRect().width-a;
  e.style.letterSpacing=d>0?((w-a)/d).toFixed(3)+'px':'0';
 });
})();
</script>
</body>
</html>
